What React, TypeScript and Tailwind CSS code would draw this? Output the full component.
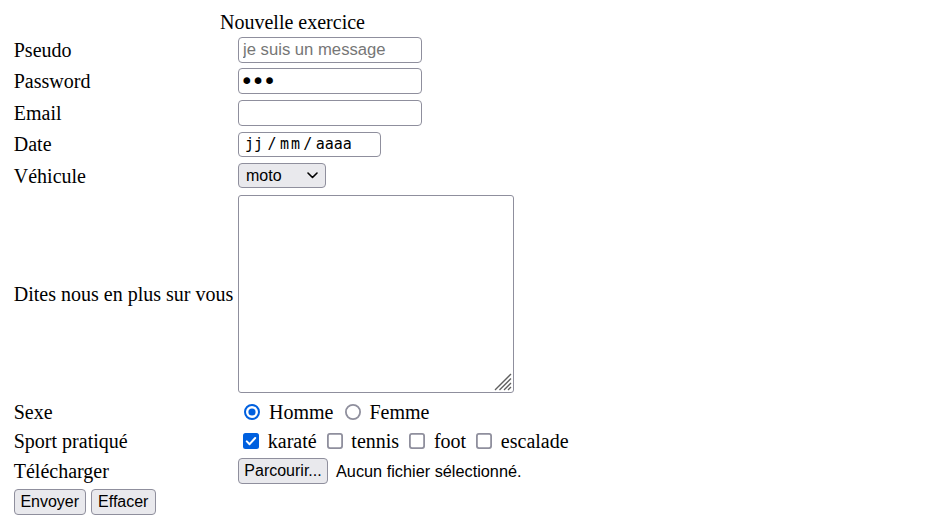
import { useState } from 'react';

const sans = "font-['Liberation_Sans',Arial,sans-serif]";
const box = 'rounded-[4px] border border-[#8f8f9d] bg-white outline-none';
const field = `h-[26px] w-[184px] ${box} px-[4px] ${sans} text-[16.67px] text-black placeholder:text-[#767676]`;
const btn = `h-[26px] rounded-[4px] border border-[#8f8f9d] bg-[#e9e9ed] ${sans} text-[16px] text-black`;
const label = 'w-[224.25px] shrink-0 whitespace-nowrap';

function Radio({ checked }: { checked: boolean }) {
  return checked ? (
    <svg width="16" height="16" viewBox="0 0 16 16" className="shrink-0">
      <circle cx="8" cy="8" r="7" fill="#fff" stroke="#0060df" strokeWidth="2" />
      <circle cx="8" cy="8" r="3.6" fill="#0060df" />
    </svg>
  ) : (
    <svg width="16" height="16" viewBox="0 0 16 16" className="shrink-0">
      <circle cx="8" cy="8" r="7.1" fill="#fff" stroke="#8f8f9d" strokeWidth="1.8" />
    </svg>
  );
}

function Check({ checked }: { checked: boolean }) {
  return checked ? (
    <svg width="16" height="16" viewBox="0 0 16 16" className="shrink-0">
      <rect x="0" y="0" width="16" height="16" rx="2.5" fill="#0060df" />
      <path d="M3.8 8.4 L6.6 11.2 L12.2 5" fill="none" stroke="#fff" strokeWidth="2" strokeLinecap="round" strokeLinejoin="round" />
    </svg>
  ) : (
    <svg width="16" height="16" viewBox="0 0 16 16" className="shrink-0">
      <rect x="0.9" y="0.9" width="14.2" height="14.2" rx="2" fill="#fff" stroke="#8f8f9d" strokeWidth="1.8" />
    </svg>
  );
}

export default function App() {
  const [sexe, setSexe] = useState('homme');
  const [sports, setSports] = useState<string[]>(['karaté']);

  const toggle = (s: string) =>
    setSports((prev) => (prev.includes(s) ? prev.filter((p) => p !== s) : [...prev, s]));

  return (
    <div className="min-h-screen bg-white pl-[10px] pt-[11px] font-['Liberation_Serif','Times_New_Roman',serif] text-[20px] text-black">
      <form onSubmit={(e) => e.preventDefault()}>
        <div className="h-[23px] w-[565px] text-center leading-[23px]">Nouvelle exercice</div>

        <div className="flex flex-col pl-[3.75px]">
          <div className="flex h-[31.5px] items-center">
            <div className={label}>Pseudo</div>
            <input type="text" placeholder="je suis un message" className={field} />
          </div>

          <div className="flex h-[31.5px] items-center">
            <div className={label}>Password</div>
            <input
              type="password"
              defaultValue="abc"
              className={`h-[26px] w-[184px] ${box} px-[1px] font-['DejaVu_Sans',sans-serif] text-[23px] leading-[24px] tracking-[-2.2px] text-black`}
            />
          </div>

          <div className="flex h-[31.5px] items-center">
            <div className={label}>Email</div>
            <input type="email" className={field} />
          </div>

          <div className="flex h-[31.5px] items-center">
            <div className={label}>Date</div>
            <div className={`flex h-[25px] w-[143px] items-center ${box} font-['DejaVu_Sans_Mono',monospace] text-[15px] text-black`}>
              <span className="ml-[6px]">jj</span>
              <span className="ml-[4.5px]">/</span>
              <span className="ml-[3.5px] tracking-[2px]">mm</span>
              <span className="ml-[1px]">/</span>
              <span className="ml-[3.5px]">aaaa</span>
            </div>
          </div>

          <div className="flex h-[31.5px] items-center">
            <div className={label}>Véhicule</div>
            <button
              type="button"
              className={`flex h-[25px] w-[88px] items-center justify-between rounded-[4px] border border-[#8f8f9d] bg-[#e9e9ed] pl-[7px] pr-[7px] ${sans} text-[16px] text-black`}
            >
              <span>moto</span>
              <svg width="11" height="7" viewBox="0 0 11 7">
                <path d="M1 1 L5.5 5.5 L10 1" fill="none" stroke="#000" strokeWidth="1.6" strokeLinecap="round" strokeLinejoin="round" />
              </svg>
            </button>
          </div>

          <div className="flex h-[205.5px] items-center">
            <div className={label}>Dites nous en plus sur vous</div>
            <div className="relative">
              <textarea className="block h-[198px] w-[276px] resize-none rounded-[3px] border border-[#8f8f9d] bg-white outline-none" />
              <svg width="18" height="18" viewBox="0 0 18 18" className="absolute bottom-[2px] right-[2px]">
                <g stroke="#5f5f5f" strokeWidth="1.3">
                  <line x1="1" y1="17" x2="17" y2="1" />
                  <line x1="5.5" y1="17" x2="17" y2="5.5" />
                  <line x1="10" y1="17" x2="17" y2="10" />
                  <line x1="14" y1="17" x2="17" y2="14" />
                </g>
              </svg>
            </div>
          </div>

          <div className="flex h-[30px] items-center">
            <div className={label}>Sexe</div>
            <div className="flex items-center">
              <span className="ml-[6.25px] cursor-default" onClick={() => setSexe('homme')}>
                <Radio checked={sexe === 'homme'} />
              </span>
              <span className="ml-[8.75px]">Homme</span>
              <span className="ml-[11.25px] cursor-default" onClick={() => setSexe('femme')}>
                <Radio checked={sexe === 'femme'} />
              </span>
              <span className="ml-[8.75px]">Femme</span>
            </div>
          </div>

          <div className="flex h-[28px] items-center">
            <div className={label}>Sport pratiqué</div>
            <div className="flex items-center">
              {['karaté', 'tennis', 'foot', 'escalade'].map((s, i) => (
                <div key={s} className={`flex items-center ${i === 0 ? 'ml-[5px]' : 'ml-[10px]'}`}>
                  <span className="cursor-default" onClick={() => toggle(s)}>
                    <Check checked={sports.includes(s)} />
                  </span>
                  <span className="ml-[8.75px]">{s}</span>
                </div>
              ))}
            </div>
          </div>

          <div className="flex h-[32px] items-center">
            <div className={label}>Télécharger</div>
            <button type="button" className={`${btn} h-[25px] w-[90px]`}>
              Parcourir...
            </button>
            <span className={`ml-[8px] ${sans} text-[16.3px]`}>Aucun fichier sélectionné.</span>
          </div>

          <div className="flex h-[30px] items-center gap-[5px]">
            <button type="submit" className={`${btn} w-[72px]`}>
              Envoyer
            </button>
            <button type="reset" className={`${btn} w-[65px]`}>
              Effacer
            </button>
          </div>
        </div>
      </form>
    </div>
  );
}
